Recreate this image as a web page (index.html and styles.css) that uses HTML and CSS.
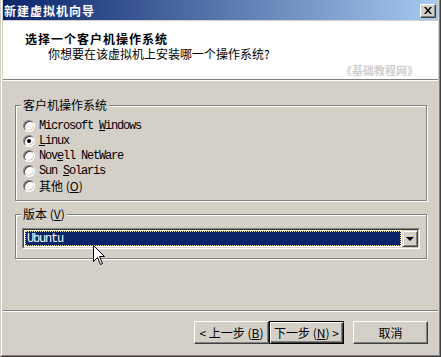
FILE: index.html
```html
<!DOCTYPE html>
<html lang="zh-CN">
<head>
<meta charset="utf-8">
<title>新建虚拟机向导</title>
<link rel="stylesheet" href="styles.css">
</head>
<body>
<div class="window">
  <div class="frame">
    <div class="titlebar">
      <span class="title">新建虚拟机向导</span>
      <span class="close-btn">
        <svg width="8" height="7" viewBox="0 0 8 7"><path d="M0 0h2l2 2.5L6 0h2L5 3.5L8 7H6L4 4.5L2 7H0l3-3.5z" fill="#000"/></svg>
      </span>
    </div>
    <div class="header">
      <div class="h-title">选择一个客户机操作系统</div>
      <div class="h-sub">你想要在该虚拟机上安装哪一个操作系统?</div>
      <div class="h-mark">《基础教程网》</div>
    </div>
    <div class="sep"></div>
    <div class="content">
      <div class="group group-os">
        <div class="legend"><span>客户机操作系统</span></div>
        <div class="radios">
          <div class="row"><span class="radio"></span><span class="mono">Microsoft <u>W</u>indows</span></div>
          <div class="row"><span class="radio checked"></span><span class="mono"><u>L</u>inux</span></div>
          <div class="row"><span class="radio"></span><span class="mono">Nov<u>e</u>ll NetWare</span></div>
          <div class="row"><span class="radio"></span><span class="mono">Sun <u>S</u>olaris</span></div>
          <div class="row"><span class="radio"></span><span class="cjk">其他 (<u>O</u>)</span></div>
        </div>
      </div>
      <div class="group group-ver">
        <div class="legend"><span>版本 (<u>V</u>)</span></div>
        <div class="combo">
          <div class="combo-inner">
            <div class="combo-value"><span class="mono">Ubuntu</span></div>
            <div class="combo-btn"><span class="tri"></span></div>
          </div>
        </div>
      </div>
    </div>
    <div class="sep sep-bottom"></div>
    <div class="buttons">
      <button class="btn">&lt; 上一步 (<u>B</u>)</button>
      <button class="btn btn-default">下一步 (<u>N</u>) &gt;</button>
      <button class="btn btn-cancel">取消</button>
    </div>
  </div>
  <svg class="cursor" width="13" height="21" viewBox="0 0 13 21"><path d="M0.5 0.5V16.5L4.5 12.5L7.5 19.5L9.5 18.5L6.5 11.5H11.5Z" fill="#fff" stroke="#000" stroke-width="1"/></svg>
</div>
</body>
</html>
```
FILE: styles.css
```css
* { box-sizing: border-box; }
html, body { margin: 0; padding: 0; background: #d4d0c8; }
body { font-family: "Noto Sans CJK SC", sans-serif; font-size: 12px; color: #000; }
u { text-decoration: underline; text-underline-offset: 1px; }

.window {
  position: relative;
  width: 441px;
  height: 357px;
  border-left: 1px solid #d4d0c8;
  border-right: 1px solid #404040;
  border-bottom: 1px solid #404040;
  display: flex;
  flex-direction: column;
}
.frame {
  flex: 1;
  border-left: 1px solid #fff;
  border-right: 1px solid #808080;
  border-bottom: 1px solid #808080;
  padding: 0 1px 1px 1px;
  background: #d4d0c8;
  display: flex;
  flex-direction: column;
}

.titlebar {
  height: 20px;
  margin-bottom: 1px;
  background: linear-gradient(to right, #0a246a, #a6caf0);
  display: flex;
  align-items: center;
  justify-content: space-between;
  padding: 1px 2px 0 1px;
}
.title {
  color: #fff;
  font-weight: bold;
  font-size: 12px;
  line-height: 14px;
  letter-spacing: 1px;
}
.close-btn {
  width: 16px;
  height: 14px;
  background: #d4d0c8;
  border: 1px solid;
  border-color: #fff #404040 #404040 #fff;
  box-shadow: inset -1px -1px 0 #808080;
  display: flex;
  align-items: center;
  justify-content: center;
  padding: 0 1px 1px 0;
}
.close-btn svg { display: block; }

.header {
  height: 58px;
  background: #fff;
  padding-top: 10px;
}
.h-title {
  padding-left: 22px;
  font-weight: bold;
  line-height: 15px;
  letter-spacing: 1px;
}
.h-sub {
  padding-left: 45px;
  line-height: 15px;
}
.h-mark {
  margin-top: 2px;
  text-align: right;
  padding-right: 20px;
  font-size: 11px;
  line-height: 14px;
  font-weight: bold;
  color: #cfcfcf;
}

.sep {
  height: 2px;
  border-top: 1px solid #808080;
  border-bottom: 1px solid #fff;
}

.content {
  padding: 0 11px 0 12px;
}
.group {
  border: 1px solid #808080;
  box-shadow: inset 1px 1px 0 #fff, 1px 1px 0 #fff;
}
.group-os {
  margin-top: 24px;
  padding: 0 0 7px 7px;
}
.group-ver {
  margin-top: 13px;
  padding: 0 0 9px 6px;
}
.legend {
  margin-top: -8px;
  height: 14px;
  line-height: 14px;
}
.group-os .legend { margin-left: -2px; }
.group-ver .legend { margin-left: -1px; }
.legend span {
  display: inline-block;
  background: #d4d0c8;
  padding: 0 2px 0 2px;
}

.radios { margin-top: 6px; }
.row {
  height: 15px;
  display: flex;
  align-items: center;
}
.radio {
  width: 12px;
  height: 12px;
  border-radius: 50%;
  border: 1px solid;
  border-color: #808080 #fff #fff #808080;
  background: #fff;
  box-shadow: inset 1px 1px 0 #404040, inset -1px -1px 0 #d4d0c8;
  margin-right: 4px;
  position: relative;
  flex: none;
}
.radio.checked::after {
  content: "";
  position: absolute;
  left: 3px;
  top: 3px;
  width: 4px;
  height: 4px;
  border-radius: 50%;
  background: #000;
}
.mono {
  font-family: "Liberation Mono", "Noto Sans CJK SC", monospace;
  font-size: 12px;
  letter-spacing: -1.2px;
  line-height: 14px;
}
.cjk { line-height: 14px; }

.combo {
  margin-top: 7px;
  width: 398px;
  height: 21px;
  border: 1px solid;
  border-color: #808080 #fff #fff #808080;
}
.combo-inner {
  height: 100%;
  border: 1px solid;
  border-color: #404040 #d4d0c8 #d4d0c8 #404040;
  background: #fff;
  display: flex;
}
.combo-value {
  flex: 1;
  margin: 1px;
  background: #0a246a;
  border: 1px dotted #f0e68c;
  color: #fff;
  display: flex;
  align-items: center;
  padding-left: 1px;
}
.combo-btn {
  width: 16px;
  height: 17px;
  background: #d4d0c8;
  border: 1px solid;
  border-color: #d4d0c8 #404040 #404040 #d4d0c8;
  box-shadow: inset 1px 1px 0 #fff, inset -1px -1px 0 #808080;
  display: flex;
  align-items: center;
  justify-content: center;
}
.tri {
  width: 0;
  height: 0;
  border-left: 4px solid transparent;
  border-right: 4px solid transparent;
  border-top: 4px solid #000;
  margin-top: 1px;
}

.sep-bottom { margin-top: 51px; }

.buttons {
  display: flex;
  justify-content: flex-end;
  padding-right: 10px;
  margin-top: 9px;
}
.btn {
  width: 75px;
  height: 23px;
  margin: 0;
  padding: 0;
  background: #d4d0c8;
  border: 1px solid;
  border-color: #fff #404040 #404040 #fff;
  box-shadow: inset -1px -1px 0 #808080;
  font-family: "Noto Sans CJK SC", sans-serif;
  font-size: 12px;
  line-height: 14px;
  color: #000;
  white-space: nowrap;
}
.btn-default {
  border-color: #000;
  box-shadow: inset 1px 1px 0 #fff, inset -1px -1px 0 #404040, inset -2px -2px 0 #808080;
}
.btn-cancel { margin-left: 9px; }

.cursor {
  position: absolute;
  left: 92px;
  top: 245px;
}
```
